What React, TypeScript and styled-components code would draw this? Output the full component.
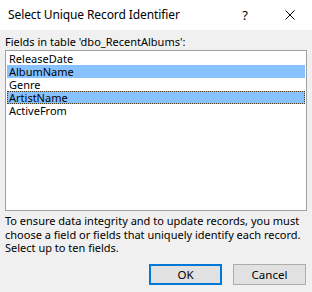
import React from "react";
import styled, { createGlobalStyle } from "styled-components";

const Global = createGlobalStyle`
  html, body {
    margin: 0;
    padding: 0;
    background: #f0f0f0;
  }
  body {
    font-family: "Noto Sans", "Open Sans", sans-serif;
  }
`;

const Window = styled.div`
  width: 312px;
  height: 292px;
  background: #f0f0f0;
  display: flex;
  flex-direction: column;
  overflow: hidden;
  color: #000;
`;

const TitleBar = styled.div`
  height: 30px;
  background: #fff;
  display: flex;
  align-items: center;
  padding-left: 8px;
  flex-shrink: 0;
`;

const Title = styled.div`
  flex: 1;
  font-size: 12px;
  letter-spacing: -0.1px;
  padding-bottom: 2px;
`;

const TitleButton = styled.div<{ $w: number }>`
  width: ${(p) => p.$w}px;
  height: 30px;
  display: flex;
  align-items: center;
  justify-content: center;
  font-size: 13px;
`;

const Body = styled.div`
  flex: 1;
  display: flex;
  flex-direction: column;
  padding: 4px 5px 0 5px;
`;

const Label = styled.div`
  font-size: 11px;
  line-height: 16px;
`;

const ListBox = styled.div`
  height: 158px;
  background: #fff;
  border: 1px solid #a0a0a0;
  padding: 1px 1px 0 1px;
`;

const Row = styled.div<{ $selected?: boolean; $focus?: boolean }>`
  height: 13px;
  line-height: 13px;
  font-size: 11px;
  padding-left: 2px;
  background: ${(p) => (p.$selected ? "#88c1ff" : "transparent")};
  outline: ${(p) => (p.$focus ? "1px dotted #4a3b1e" : "none")};
  outline-offset: -1px;
  white-space: nowrap;
`;

const Description = styled.div`
  margin-top: 3px;
  font-size: 11px;
  line-height: 13.5px;
  white-space: nowrap;
`;

const Buttons = styled.div`
  margin-top: auto;
  margin-bottom: 7px;
  display: flex;
  justify-content: flex-end;
  gap: 11px;
  padding-right: 1px;
`;

const Button = styled.button<{ $default?: boolean }>`
  width: 73px;
  height: 21px;
  box-sizing: border-box;
  background: #e1e1e1;
  border: ${(p) => (p.$default ? "2px solid #0078d7" : "1px solid #adadad")};
  font-family: inherit;
  font-size: 11.5px;
  color: #000;
  padding: 0;
`;

const fields = ["ReleaseDate", "AlbumName", "Genre", "ArtistName", "ActiveFrom"];

export default function App() {
  return (
    <>
      <Global />
      <Window>
        <TitleBar>
          <Title>Select Unique Record Identifier</Title>
          <TitleButton $w={46}>?</TitleButton>
          <TitleButton $w={44}>
            <svg width="10" height="10" viewBox="0 0 10 10">
              <path d="M0.5 0.5 L9.5 9.5 M9.5 0.5 L0.5 9.5" stroke="#000" strokeWidth="1" />
            </svg>
          </TitleButton>
        </TitleBar>
        <Body>
          <Label>Fields in table 'dbo_RecentAlbums':</Label>
          <ListBox>
            {fields.map((f) => (
              <Row
                key={f}
                $selected={f === "AlbumName" || f === "ArtistName"}
                $focus={f === "ArtistName"}
              >
                {f}
              </Row>
            ))}
          </ListBox>
          <Description>
            To ensure data integrity and to update records, you must
            <br />
            choose a field or fields that uniquely identify each record.
            <br />
            Select up to ten fields.
          </Description>
          <Buttons>
            <Button $default>OK</Button>
            <Button>Cancel</Button>
          </Buttons>
        </Body>
      </Window>
    </>
  );
}
